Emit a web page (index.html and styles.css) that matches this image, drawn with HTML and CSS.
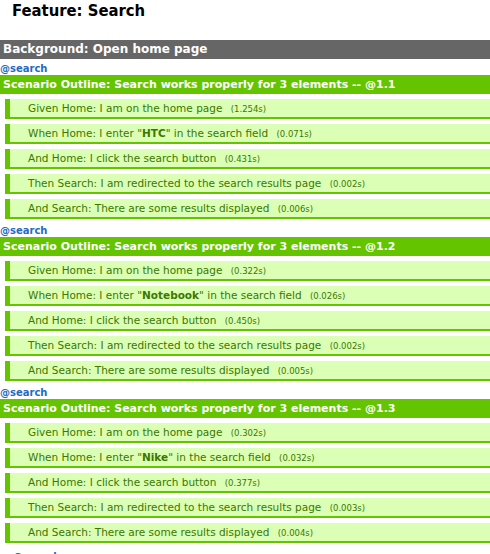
FILE: index.html
```html
<!DOCTYPE html>
<html>
<head>
<meta charset="utf-8">
<link rel="stylesheet" href="styles.css">
</head>
<body>
<div class="report">
  <h2 class="feature-title">Feature: Search</h2>
  <h3 class="background">Background: Open home page</h3>

  <div class="tag">@search</div>
  <h3 class="scenario">Scenario Outline: Search works properly for 3 elements -- @1.1</h3>
  <ol class="steps">
    <li class="step">Given Home: I am on the home page <span class="dur">(1.254s)</span></li>
    <li class="step">When Home: I enter "<b>HTC</b>" in the search field <span class="dur">(0.071s)</span></li>
    <li class="step">And Home: I click the search button <span class="dur">(0.431s)</span></li>
    <li class="step">Then Search: I am redirected to the search results page <span class="dur">(0.002s)</span></li>
    <li class="step">And Search: There are some results displayed <span class="dur">(0.006s)</span></li>
  </ol>

  <div class="tag">@search</div>
  <h3 class="scenario">Scenario Outline: Search works properly for 3 elements -- @1.2</h3>
  <ol class="steps">
    <li class="step">Given Home: I am on the home page <span class="dur">(0.322s)</span></li>
    <li class="step">When Home: I enter "<b>Notebook</b>" in the search field <span class="dur">(0.026s)</span></li>
    <li class="step">And Home: I click the search button <span class="dur">(0.450s)</span></li>
    <li class="step">Then Search: I am redirected to the search results page <span class="dur">(0.002s)</span></li>
    <li class="step">And Search: There are some results displayed <span class="dur">(0.005s)</span></li>
  </ol>

  <div class="tag">@search</div>
  <h3 class="scenario">Scenario Outline: Search works properly for 3 elements -- @1.3</h3>
  <ol class="steps">
    <li class="step">Given Home: I am on the home page <span class="dur">(0.302s)</span></li>
    <li class="step">When Home: I enter "<b>Nike</b>" in the search field <span class="dur">(0.032s)</span></li>
    <li class="step">And Home: I click the search button <span class="dur">(0.377s)</span></li>
    <li class="step">Then Search: I am redirected to the search results page <span class="dur">(0.003s)</span></li>
    <li class="step">And Search: There are some results displayed <span class="dur">(0.004s)</span></li>
  </ol>

  <div class="tag tag-next">@search</div>
</div>
</body>
</html>
```

FILE: styles.css
```css
html, body {
  margin: 0;
  padding: 0;
  background: #fff;
}
.report {
  font-family: "DejaVu Sans", sans-serif;
  font-size: 10.5px;
  color: #000;
}
.feature-title {
  margin: 0;
  padding: 1px 12px 0;
  height: 39px;
  font-family: "DejaVu Sans Condensed", "DejaVu Sans", sans-serif;
  font-size: 16.5px;
  font-weight: bold;
  line-height: 20px;
}
.background, .scenario {
  margin: 0;
  padding: 0 3px;
  font-weight: bold;
  color: #fff;
  line-height: 19px;
  height: 19px;
  white-space: nowrap;
  overflow: hidden;
}
.background {
  background: #666;
  font-size: 12px;
  margin-bottom: 3px;
}
.scenario {
  background: #65c400;
  font-size: 11px;
  margin-bottom: 5px;
}
.tag {
  color: #246ac1;
  font-weight: bold;
  font-size: 10px;
  line-height: 13px;
  height: 13px;
}
.tag-next {
  padding: 2px 0 0 13px;
}
.steps {
  list-style: none;
  margin: 0;
  padding: 0;
}
.step {
  margin: 0 0 5px 5px;
  padding: 0 0 0 18px;
  height: 18px;
  line-height: 18px;
  background: #dbffb4;
  border-left: 5px solid #65c400;
  border-bottom: 2px solid #65c400;
  color: #3d7700;
  white-space: nowrap;
  overflow: hidden;
}
.dur {
  font-size: 8.5px;
  margin-left: 5px;
}
```
